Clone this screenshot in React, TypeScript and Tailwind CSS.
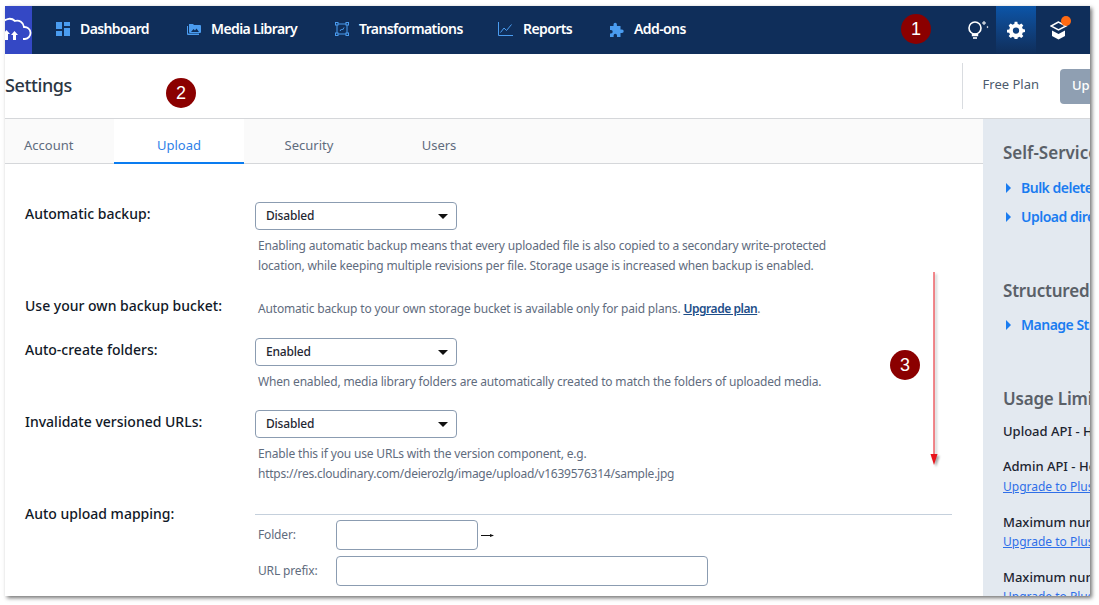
const font = { fontFamily: '"Noto Sans", "Liberation Sans", sans-serif' }

function DashboardIcon() {
    return (
        <svg width="14" height="14" viewBox="0 0 14 14" fill="#4a9cf0">
            <rect x="0" y="0" width="6" height="7" />
            <rect x="0" y="9" width="6" height="5" />
            <rect x="8" y="0" width="6" height="4" />
            <rect x="8" y="6" width="6" height="8" />
        </svg>
    )
}

function MediaIcon() {
    return (
        <svg width="14" height="12" viewBox="0 0 14 12" fill="#4a9cf0">
            <path d="M2 1h4l1 1h6a1 1 0 0 1 1 1v6a1 1 0 0 1-1 1H3a1 1 0 0 1-1-1z" />
            <path d="M0 3h1v7.500h11V12H1a1 1 0 0 1-1-1z" />
            <path d="M4 9l2.500-3 1.500 1.500 1.500-2L12 9z" fill="#0f2e5a" />
        </svg>
    )
}

function TransformIcon() {
    return (
        <svg width="14" height="14" viewBox="0 0 14 14" fill="none" stroke="#4a9cf0" strokeWidth="1">
            <rect x="2" y="2" width="10" height="10" />
            <rect x="0.500" y="0.500" width="2.500" height="2.500" fill="#0f2e5a" />
            <rect x="11" y="0.500" width="2.500" height="2.500" fill="#0f2e5a" />
            <rect x="0.500" y="11" width="2.500" height="2.500" fill="#0f2e5a" />
            <rect x="11" y="11" width="2.500" height="2.500" fill="#0f2e5a" />
            <path d="M5 9l1.500-2 1 1L9 5.500" />
        </svg>
    )
}

function ReportsIcon() {
    return (
        <svg width="15" height="14" viewBox="0 0 15 14" fill="none" stroke="#4a9cf0" strokeWidth="1">
            <path d="M0.500 0v13.500H15" />
            <path d="M2.500 10.500l3.500-4.500 2.500 2.500 5-6" />
        </svg>
    )
}

function PuzzleIcon() {
    return (
        <svg width="15" height="15" viewBox="0 0 15 15" fill="#4a9cf0">
            <path d="M1 4h3.500V2.500a1.700 1.700 0 0 1 3.400 0V4H11.500v3.500H13a1.700 1.700 0 0 1 0 3.400h-1.500V15H8v-1.500a1.700 1.700 0 0 0-3.400 0V15H1v-3.500h1a1.700 1.700 0 0 0 0-3.400H1z" />
        </svg>
    )
}

function BulbIcon() {
    return (
        <svg width="22" height="20" viewBox="0 0 22 20" fill="none" stroke="white">
            <circle cx="8" cy="8" r="6" strokeWidth="1.600" />
            <path d="M5.500 13.500v2h5v-2" strokeWidth="1.400" fill="white" />
            <path d="M6 18h4" strokeWidth="1.600" />
            <path d="M17 1v4M15 3h4" strokeWidth="1" />
            <circle cx="20.500" cy="7" r="0.600" fill="white" strokeWidth="0.500" />
        </svg>
    )
}

function GearIcon() {
    return (
        <svg width="18" height="18" viewBox="0 0 24 24" fill="white">
            <path
                fillRule="evenodd"
                d="M13.800 1l.5 3a8.500 8.500 0 0 1 2.300 1l2.500-1.800 2.700 2.700L20 8.400a8.500 8.500 0 0 1 1 2.300l3 .5v3.600l-3 .5a8.500 8.500 0 0 1-1 2.300l1.800 2.500-2.700 2.700-2.500-1.800a8.500 8.500 0 0 1-2.300 1l-.5 3h-3.600l-.5-3a8.500 8.500 0 0 1-2.300-1l-2.500 1.800-2.700-2.700L4 18.100a8.500 8.500 0 0 1-1-2.300l-3-.5v-3.600l3-.5a8.500 8.500 0 0 1 1-2.300L2.200 5.900l2.700-2.700L7.400 5a8.500 8.500 0 0 1 2.300-1l.5-3zM12 8.500a4.200 4.200 0 1 0 0 8.400 4.200 4.200 0 0 0 0-8.400z"
            />
        </svg>
    )
}

function BoxIcon() {
    return (
        <svg width="18" height="19" viewBox="0 0 18 19" fill="white">
            <path d="M8.500 1L1 5l7.500 4L16 5z" fill="none" stroke="white" strokeWidth="1.500" />
            <path d="M2 9.500l6.500 3.500L15 9.500V15l-6.500 3.500L2 15z" />
        </svg>
    )
}

function Logo() {
    return (
        <svg width="27" height="26" viewBox="0 0 27 26" fill="none">
            <path d="M-3 7a8 8 0 0 1 13-3 7 7 0 0 1 9 6 6 6 0 0 1 1 12h-2" stroke="white" strokeWidth="1.800" />
            <path d="M0 23v-6h-2l3.500-4 3.500 4H3v6zM8 23v-5H6l3.500-4 3.500 4h-2v5z" fill="white" />
        </svg>
    )
}

function FolderArrow() {
    return (
        <svg className="ml-[3px]" width="14" height="8" viewBox="0 0 14 8" fill="none">
            <path d="M0 4.500H12" stroke="#111" strokeWidth="1" />
            <path d="M9 3l4 1.500-4 1.500z" fill="#111" />
        </svg>
    )
}

function Select({ value }: { value: string }) {
    return (
        <div className="flex h-7 w-[202px] items-center justify-between rounded border border-[#8b9cb1] bg-white pl-[10px] pr-[7px]">
            <span className="text-xs font-medium tracking-[-0.2px] text-[#1f2733]">{value}</span>
            <span className="mr-[1px] h-0 w-0 border-x-[5px] border-t-[5px] border-x-transparent border-t-[#111]" />
        </div>
    )
}

function Help({ children }: { children: React.ReactNode }) {
    return <p className="ml-[3px] text-xs leading-5 tracking-[-0.17px] text-[#5f6c7e]">{children}</p>
}

function Label({ children }: { children: React.ReactNode }) {
    return <div className="w-[230px] shrink-0 pt-[2px] text-sm font-medium text-[#111827]">{children}</div>
}

function Badge({ n, className }: { n: number; className: string }) {
    return (
        <div
            className={`absolute flex h-[30px] w-[30px] items-center justify-center rounded-full bg-[#8b0000] text-lg text-white ${className}`}
            style={{ fontFamily: '"Liberation Sans", sans-serif' }}
        >
            {n}
        </div>
    )
}

function SideLink({ label, className }: { label: string; className: string }) {
    return (
        <div className={`flex h-[20px] items-center pl-[3px] text-sm font-semibold tracking-[-0.5px] text-[#1a7cf0] ${className}`}>
            <span className="mr-[10px] h-0 w-0 border-y-[5px] border-l-[5px] border-y-transparent border-l-[#1a7cf0]" />
            {label}
        </div>
    )
}

const navItems = [
    { label: 'Dashboard', icon: <DashboardIcon />, width: 'w-[131px]' },
    { label: 'Media Library', icon: <MediaIcon />, width: 'w-[148px]' },
    { label: 'Transformations', icon: <TransformIcon />, width: 'w-[164px]' },
    { label: 'Reports', icon: <ReportsIcon />, width: 'w-[111px]' },
    { label: 'Add-ons', icon: <PuzzleIcon />, width: 'w-[100px]' },
]

export default function App() {
    return (
        <div className="relative h-[605px] w-[1099px] overflow-hidden bg-white pl-[5px] pt-[6px]" style={font}>
            <div className="flex h-[590px] w-[1085px] flex-col overflow-hidden bg-white shadow-[2px_2px_4px_rgba(0,0,0,0.55)]">
                {/* Nav */}
                <div className="flex h-12 shrink-0 items-center bg-[#0f2e5a] text-white">
                    <div className="flex h-12 w-[27px] items-center justify-center overflow-hidden bg-[#3448c5]">
                        <Logo />
                    </div>
                    <div className="flex pl-[23px]">
                        {navItems.map((item) => (
                            <div key={item.label} className={`flex items-center gap-[10px] pb-[2px] ${item.width}`}>
                                <span className="flex w-[15px] justify-center">{item.icon}</span>
                                <span className="text-sm font-semibold tracking-[-0.6px]">{item.label}</span>
                            </div>
                        ))}
                    </div>
                    <div className="ml-auto flex h-12 items-center">
                        <div className="flex h-12 w-[40px] items-center justify-center pl-1">
                            <BulbIcon />
                        </div>
                        <div className="flex h-12 w-[40px] items-center justify-center bg-gradient-to-b from-[#0b55a8] to-[#0f2e5a]">
                            <GearIcon />
                        </div>
                        <div className="relative flex h-12 w-[54px] items-center justify-start pl-[14px]">
                            <BoxIcon />
                            <span className="absolute left-[25px] top-[10px] h-[10px] w-[10px] rounded-full bg-[#ff6a13]" />
                        </div>
                    </div>
                </div>

                {/* Title bar */}
                <div className="flex h-[65px] shrink-0 items-center justify-between border-b border-[#d5d7da]">
                    <h1 className="pb-[2px] text-lg font-medium tracking-[-0.4px] text-[#2b3643]">Settings</h1>
                    <div className="flex h-[46px] items-center border-l border-[#d9dce0] pl-5">
                        <span className="mb-[2px] mr-[21px] text-[13px] text-[#4d5b6d]">Free Plan</span>
                        <div className="flex h-[35px] w-[30px] items-center overflow-hidden rounded-l bg-[#8f9fb2] pl-3 text-[13px] font-medium text-white">
                            Upgrade
                        </div>
                    </div>
                </div>

                <div className="flex min-h-0 flex-1">
                    {/* Main */}
                    <div className="w-[978px] shrink-0">
                        <div className="flex h-[45px] border-b border-[#d5d7da] bg-[#fafafa] text-[13px] text-[#5f6c7e]">
                            <div className="flex w-[109px] items-center pl-[19px] pt-[10px]">Account</div>
                            <div className="-mb-px flex w-[130px] items-center justify-center border-b-2 border-[#0a7cf0] bg-white pt-[10px] text-[#2f7fe8]">
                                Upload
                            </div>
                            <div className="flex w-[130px] items-center justify-center pt-[10px]">Security</div>
                            <div className="flex w-[130px] items-center justify-center pt-[10px]">Users</div>
                        </div>

                        <div className="pl-5 pr-[31px] pt-[38px]">
                            <div className="flex">
                                <Label>Automatic backup:</Label>
                                <div>
                                    <Select value="Disabled" />
                                    <div className="mt-[6px]">
                                        <Help>
                                            Enabling automatic backup means that every uploaded file is also copied to a secondary write-protected
                                            <br />
                                            location, while keeping multiple revisions per file. Storage usage is increased when backup is enabled.
                                        </Help>
                                    </div>
                                </div>
                            </div>

                            <div className="mt-[18px] flex">
                                <Label>Use your own backup bucket:</Label>
                                <div className="pt-[5px]">
                                    <Help>
                                        Automatic backup to your own storage bucket is available only for paid plans.{' '}
                                        <span className="font-semibold tracking-[-0.45px] text-[#1d4e89] underline">Upgrade plan</span>.
                                    </Help>
                                </div>
                            </div>

                            <div className="mt-[19px] flex">
                                <Label>Auto-create folders:</Label>
                                <div>
                                    <Select value="Enabled" />
                                    <div className="mt-[6px]">
                                        <Help>When enabled, media library folders are automatically created to match the folders of uploaded media.</Help>
                                    </div>
                                </div>
                            </div>

                            <div className="mt-[18px] flex">
                                <Label>Invalidate versioned URLs:</Label>
                                <div>
                                    <Select value="Disabled" />
                                    <div className="mt-[6px]">
                                        <Help>
                                            Enable this if you use URLs with the version component, e.g.
                                            <br />
                                            <span className="tracking-[-0.24px]">https://res.cloudinary.com/deierozlg/image/upload/v1639576314/sample.jpg</span>
                                        </Help>
                                    </div>
                                </div>
                            </div>

                            <div className="mt-[18px] flex">
                                <Label>Auto upload mapping:</Label>
                                <div className="mt-[12px] flex-1 border-t border-[#c5d0dc] pt-[5px]">
                                    <div className="flex items-center">
                                        <span className="ml-[3px] w-[78px] text-xs tracking-[-0.16px] text-[#5f6c7e]">Folder:</span>
                                        <div className="h-[30px] w-[142px] rounded border border-[#8b9cb1]" />
                                        <FolderArrow />
                                    </div>
                                    <div className="mt-[6px] flex items-center">
                                        <span className="ml-[3px] w-[78px] text-xs tracking-[-0.16px] text-[#5f6c7e]">URL prefix:</span>
                                        <div className="h-[30px] w-[372px] rounded border border-[#8b9cb1]" />
                                    </div>
                                </div>
                            </div>
                        </div>
                    </div>

                    {/* Side panel */}
                    <div className="min-w-0 flex-1 overflow-hidden whitespace-nowrap bg-[#e3e9f0] pl-5 pt-[22px]">
                        <h3 className="text-[17px] font-semibold leading-6 text-[#5a6068]">Self-Service</h3>
                        <SideLink label="Bulk delete" className="mt-[13px]" />
                        <SideLink label="Upload directly" className="mt-[9px]" />
                        <h3 className="mt-[52px] text-[17px] font-semibold leading-6 tracking-[-0.2px] text-[#5a6068]">Structured</h3>
                        <SideLink label="Manage Structured" className="mt-[12px]" />
                        <h3 className="mt-[52px] text-[17px] font-semibold leading-6 tracking-[-0.2px] text-[#5a6068]">Usage Limits</h3>
                        <div className="mt-[10px] text-[13px] font-medium leading-5 text-[#1c2430]">Upload API - Hourly</div>
                        <div className="mt-[15px] text-[13px] font-medium leading-5 text-[#1c2430]">Admin API - Hourly</div>
                        <div className="mt-[3px] text-xs leading-4 text-[#2f6fe8] underline">Upgrade to Plus</div>
                        <div className="mt-[17px] text-[13px] font-medium leading-5 text-[#1c2430]">Maximum number</div>
                        <div className="mt-[2px] text-xs leading-4 text-[#2f6fe8] underline">Upgrade to Plus</div>
                        <div className="mt-[17px] text-[13px] font-medium leading-5 text-[#1c2430]">Maximum number</div>
                        <div className="mt-[2px] text-xs leading-4 text-[#2f6fe8] underline">Upgrade to Plus</div>
                    </div>
                </div>
            </div>

            {/* Annotations */}
            <Badge n={1} className="left-[901px] top-[14px]" />
            <Badge n={2} className="left-[166px] top-[78px]" />
            <Badge n={3} className="left-[890px] top-[350px]" />
            <svg
                className="absolute left-[928px] top-[272px] drop-shadow-[2px_2px_1px_rgba(0,0,0,0.35)]"
                width="14"
                height="196"
                viewBox="0 0 14 196"
                fill="none"
            >
                <path d="M6 0V184" stroke="#e8141c" strokeWidth="1" />
                <path d="M2.500 182h7L6 193z" fill="#e8141c" />
            </svg>
        </div>
    )
}
